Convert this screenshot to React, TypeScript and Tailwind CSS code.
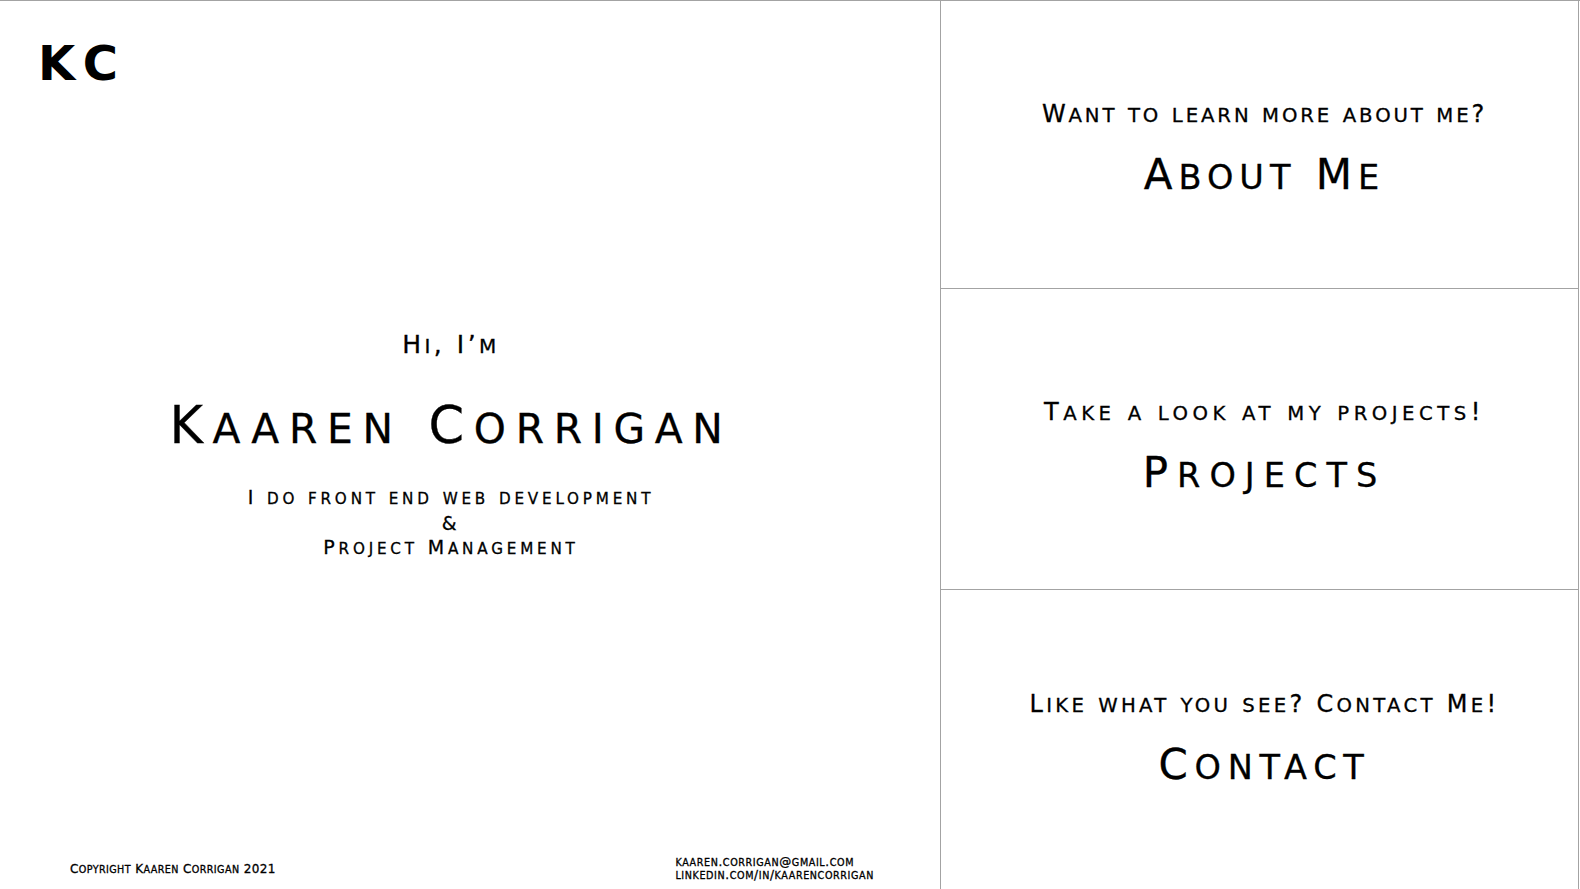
import React from "react";

function Sc({ text, r = 0.8 }: { text: string; r?: number }) {
  const parts: { s: string; small: boolean }[] = [];
  for (const ch of text) {
    const small = ch !== ch.toUpperCase();
    const last = parts[parts.length - 1];
    if (last && last.small === small) last.s += ch;
    else parts.push({ s: ch, small });
  }
  return (
    <>
      {parts.map((p, i) =>
        p.small ? (
          <span key={i} style={{ fontSize: `${r}em` }}>
            {p.s.toUpperCase()}
          </span>
        ) : (
          <span key={i}>{p.s}</span>
        )
      )}
    </>
  );
}

const font = "font-['DejaVu_Sans',sans-serif]";

function Section({
  sub,
  title,
  h,
  subTrack,
  titleTrack,
}: {
  sub: string;
  title: string;
  h: string;
  subTrack: string;
  titleTrack: string;
}) {
  return (
    <div className={`${h} flex flex-col items-center justify-center border-b border-[#a3a3a3] pl-[10px] text-black last:border-b-0`}>
      <div className={`text-[24px] leading-[30px] ${subTrack}`}>
        <Sc text={sub} r={0.82} />
      </div>
      <div className={`mt-[20px] text-[42px] leading-[48px] ${titleTrack}`}>
        <Sc text={title} />
      </div>
    </div>
  );
}

export default function App() {
  return (
    <div className={`${font} flex h-[889px] w-[1580px] border-t border-[#a3a3a3] bg-white text-black`}>
      <div className="flex w-[941px] flex-col border-r border-[#a3a3a3] [-webkit-text-stroke:0.3px_#000]">
        <div className="h-[100px] pl-[38px] pt-[38px]">
          <div className="text-[48px] font-bold leading-[48px] tracking-[0.2em] [-webkit-text-stroke:0px_#000]">KC</div>
        </div>
        <div className="flex flex-1 flex-col items-center justify-center pr-[38px]">
          <div className="text-[25px] leading-[30px] tracking-[0.14em]">
            <Sc text="Hi, I’m" />
          </div>
          <div className="mt-[35px] text-[51px] leading-[60px] tracking-[0.19em]">
            <Sc text="Kaaren Corrigan" />
          </div>
          <div className="mt-[26px] flex flex-col items-center text-[19px] leading-[24px] tracking-[0.2em]">
            <div>
              <Sc text="I do front end web development" />
            </div>
            <div>&amp;</div>
            <div>
              <Sc text="Project Management" />
            </div>
          </div>
        </div>
        <div className="flex h-[100px] items-end pb-[7px]">
          <div className="flex w-full items-center pl-[70px] pr-[66px]">
            <div className="text-[12px] leading-[14px] tracking-[0.4px]">
              <Sc text="Copyright Kaaren Corrigan 2021" />
            </div>
            <div className="ml-auto text-[12px] leading-[12px] tracking-[0.6px]">
              <div>
                <Sc text="kaaren.corrigan@gmail.com" />
              </div>
              <div>
                <Sc text="linkedin.com/in/kaarencorrigan" />
              </div>
            </div>
          </div>
        </div>
      </div>
      <div className="mr-[1px] flex flex-1 flex-col border-r border-[#a3a3a3] [-webkit-text-stroke:0.3px_#000]">
        <Section
          h="h-[288px] pt-[12px]"
          sub="Want to learn more about me?"
          title="About Me"
          subTrack="tracking-[2.9px]"
          titleTrack="tracking-[6px]"
        />
        <Section
          h="h-[301px] pt-[18px]"
          sub="Take a look at my projects!"
          title="Projects"
          subTrack="tracking-[4.5px]"
          titleTrack="tracking-[9px]"
        />
        <Section
          h="flex-1 pt-[2px]"
          sub="Like what you see? Contact Me!"
          title="Contact"
          subTrack="tracking-[3.3px]"
          titleTrack="tracking-[6.7px]"
        />
      </div>
    </div>
  );
}
